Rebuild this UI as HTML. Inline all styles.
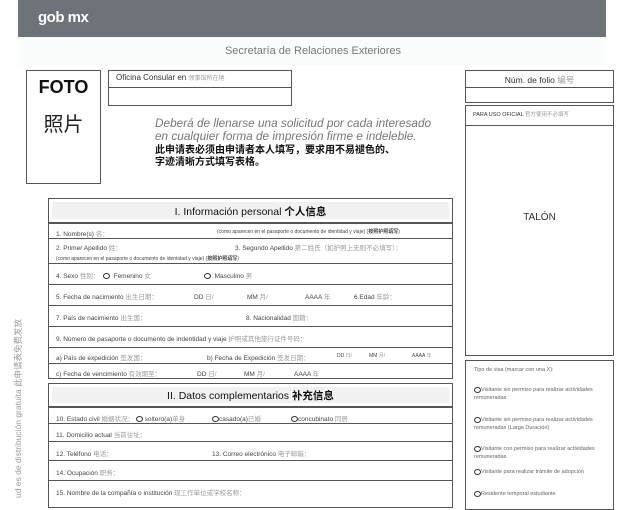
<!DOCTYPE html>
<html><head><meta charset="utf-8"><style>
*{margin:0;padding:0;box-sizing:border-box}
body{width:626px;height:500px;overflow:hidden;background:#fff;position:relative;font-family:"Liberation Sans","Noto Sans CJK SC",sans-serif;color:#333}
.a{position:absolute}
.box{position:absolute;border:1px solid #555}
.row{position:absolute;left:0;right:0;border-top:1px solid #555;font-size:6.5px;color:#444;padding-left:7px;white-space:nowrap;background:#fff}
.cn{color:#999}
.c{display:inline-block;width:7px;height:6px;border:1px solid #333;border-radius:50%;vertical-align:middle}
</style></head><body>
<div class="a" style="left:18px;top:0;width:588px;height:37px;background:#6e737a"></div>
<div class="a" style="left:38px;top:9px;color:#fff;font-size:15px;font-weight:bold;letter-spacing:-0.5px">gob mx</div>
<div class="a" style="left:18px;top:37px;width:588px;height:28px;background:#fafbfb"></div>
<div class="a" style="left:0;width:626px;top:45px;text-align:center;font-size:11px;color:#777">Secretaría de Relaciones Exteriores</div>

<div class="box" style="left:26px;top:70px;width:75px;height:114px;text-align:center">
<div style="font-size:18px;font-weight:bold;color:#111;margin-top:6px">FOTO</div>
<div style="font-size:20px;color:#222;margin-top:10px">照片</div></div>

<div class="box" style="left:108px;top:70px;width:184px;height:36px">
<div style="height:17px;border-bottom:1px solid #555;font-size:8px;padding:2px 0 0 7px">Oficina Consular en <span class="cn" style="font-size:6px">领事馆所在地</span></div></div>

<div class="a" style="left:155px;top:117px;font-size:11.8px;font-style:italic;color:#777;line-height:13px">Deberá de llenarse una solicitud por cada interesado<br>en cualquier forma de impresión firme e indeleble.</div>
<div class="a" style="left:155px;top:145px;font-size:10px;font-weight:bold;color:#111;line-height:12px">此申请表必须由申请者本人填写，要求用不易褪色的、<br>字迹清晰方式填写表格。</div>

<div class="box" style="left:465px;top:70px;width:149px;height:33px"><div style="height:17px;border-bottom:1px solid #555;font-size:8.5px;text-align:center;padding-top:3px">Núm. de folio <span class="cn">编号</span></div></div>
<div class="box" style="left:465px;top:105px;width:149px;height:251px"><div style="height:20px;border-bottom:1px solid #555;font-size:5.5px;padding:4px 0 0 7px">PARA USO OFICIAL <span class="cn">官方使用不必填写</span></div>
<div style="text-align:center;font-size:10px;margin-top:86px">TALÓN</div></div>
<div class="box" style="left:465px;top:360px;width:149px;height:150px;font-size:5.5px;color:#666;line-height:8px">
<div style="margin:5px 0 0 8px">Tipo de visa (marcar con una X):</div>
<div style="margin:12px 0 0 8px"><span class="c"></span>Visitante sin permiso para realizar actividades<br>remuneradas</div>
<div style="margin:14px 0 0 8px"><span class="c"></span>Visitante sin permiso para realizar actividades<br>remuneradas (Larga Duración)</div>
<div style="margin:13px 0 0 8px"><span class="c"></span>Visitante con permiso para realizar actividades<br>remuneradas</div>
<div style="margin:7px 0 0 8px"><span class="c"></span>Visitante para realizar trámite de adopción</div>
<div style="margin:14px 0 0 8px"><span class="c"></span>Residente temporal estudiante</div>
</div>

<div class="box" style="left:48px;top:198px;width:405px;height:181px">
<div class="a" style="left:3px;right:3px;top:3px;height:17px;background:#f1f1f1;text-align:center;font-size:10.5px;color:#111;padding-top:2px">I. Información personal <b>个人信息</b></div>
<div class="row" style="top:23px;height:16px;padding-top:4px;border-top:2px solid #555">1. Nombre(s) <span class="cn">名：</span><span style="position:absolute;left:168px;font-size:5px">(como aparecen en el pasaporte o documento de identidad y viaje) (<b>按照护照填写</b>)</span></div>
<div class="row" style="top:39px;height:25px;padding-top:3px">2. Primer Apellido <span class="cn">姓：</span><span style="position:absolute;left:186px">3. Segundo Apellido <span class="cn">第二姓氏（如护照上无则不必填写）：</span></span><div style="font-size:5px;margin-top:3px">(como aparecen en el pasaporte o documento de identidad y viaje) (<b>按照护照填写</b>)</div></div>
<div class="row" style="top:64px;height:21px;padding-top:6px">4. Sexo <span class="cn">性别：</span> &nbsp;<span class="c"></span>&nbsp; Femenino <span class="cn">女</span><span style="position:absolute;left:155px"><span class="c"></span>&nbsp; Masculino <span class="cn">男</span></span></div>
<div class="row" style="top:85px;height:21px;padding-top:6px">5. Fecha de nacimiento <span class="cn">出生日期：</span><span style="position:absolute;left:145px">DD <span class="cn">日/</span></span><span style="position:absolute;left:198px">MM <span class="cn">月/</span></span><span style="position:absolute;left:256px">AAAA <span class="cn">年</span></span><span style="position:absolute;left:305px">6.Edad <span class="cn">年龄：</span></span></div>
<div class="row" style="top:106px;height:21px;padding-top:6px">7. País de nacimiento <span class="cn">出生国：</span><span style="position:absolute;left:197px">8. Nacionalidad <span class="cn">国籍：</span></span></div>
<div class="row" style="top:127px;height:21px;padding-top:6px">9. Número de pasaporte o documento de indentidad y viaje <span class="cn">护照或其他旅行证件号码：</span></div>
<div class="row" style="top:148px;height:16px;padding-top:4px">a) País de expedición <span class="cn">签发国：</span><span style="position:absolute;left:158px">b) Fecha de Expedición <span class="cn">签发日期：</span></span><span style="position:absolute;left:288px;font-size:5px">DD <span class="cn">日/</span></span><span style="position:absolute;left:320px;font-size:5px">MM <span class="cn">月/</span></span><span style="position:absolute;left:363px;font-size:5px">AAAA <span class="cn">年</span></span></div>
<div class="row" style="top:164px;height:15px;padding-top:4px">c) Fecha de vencimiento <span class="cn">有效期至：</span><span style="position:absolute;left:148px">DD <span class="cn">日/</span></span><span style="position:absolute;left:195px">MM <span class="cn">月/</span></span><span style="position:absolute;left:245px">AAAA <span class="cn">年</span></span></div>
</div>

<div class="box" style="left:48px;top:383px;width:405px;height:125px">
<div class="a" style="left:3px;right:3px;top:3px;height:16px;background:#f1f1f1;text-align:center;font-size:10.5px;color:#111;padding-top:1px">II. Datos complementarios <b>补充信息</b></div>
<div class="row" style="top:22px;height:17px;padding-top:5px;border-top:2px solid #555">10. Estado civil <span class="cn">婚姻状况：</span> <span class="c"></span> soltero(a)<span class="cn">单身</span><span style="position:absolute;left:163px"><span class="c"></span>casado(a)<span class="cn">已婚</span></span><span style="position:absolute;left:242px"><span class="c"></span>concubinato <span class="cn">同居</span></span></div>
<div class="row" style="top:39px;height:18px;padding-top:5px">11. Domicilio actual <span class="cn">当前住址：</span></div>
<div class="row" style="top:57px;height:19px;padding-top:6px">12. Teléfono <span class="cn">电话：</span><span style="position:absolute;left:163px">13. Correo electrónico <span class="cn">电子邮箱：</span></span></div>
<div class="row" style="top:76px;height:20px;padding-top:6px">14. Ocupación <span class="cn">职务：</span></div>
<div class="row" style="top:96px;height:20px;padding-top:6px">15. Nombre de la compañía o institución <span class="cn">现工作单位或学校名称：</span></div>
</div>

<div class="a" style="left:12px;top:498px;transform-origin:0 0;transform:rotate(-90deg);font-size:8.5px;color:#999;white-space:nowrap">ud es de distribución gratuita 此申请表免费发放</div>
</body></html>
